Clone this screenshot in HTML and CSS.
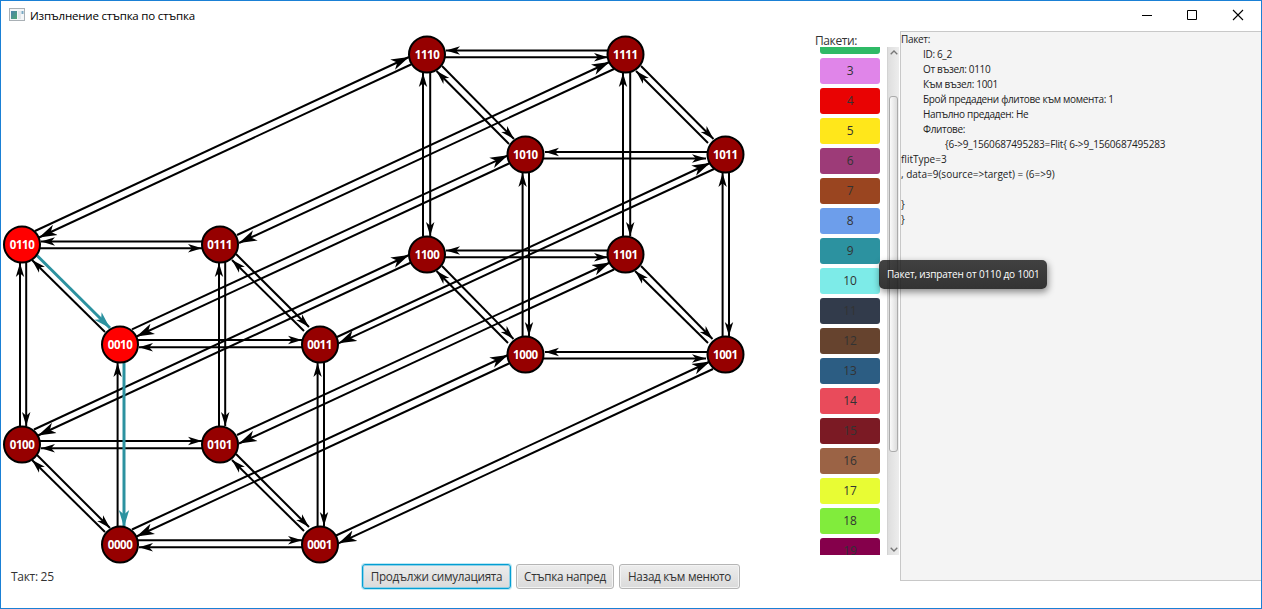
FILE: index.html
```
<!DOCTYPE html>
<html lang="bg">
<head>
<meta charset="utf-8">
<title>Изпълнение стъпка по стъпка</title>
<link rel="stylesheet" href="styles.css">
</head>
<body>
<div class="window">
  <header class="titlebar">
    <svg class="app-icon" width="16" height="14" viewBox="0 0 16 14">
      <defs><linearGradient id="pane" x1="0" y1="0" x2="1" y2="1"><stop offset="0" stop-color="#4b82ad"/><stop offset="1" stop-color="#4fa772"/></linearGradient></defs>
      <rect x=".5" y=".5" width="15" height="12" fill="#f4f6f8" stroke="#a9b0b5"/>
      <rect x="2" y="3" width="6" height="8" fill="url(#pane)"/>
      <rect x="9" y="3" width="3" height="8" fill="#e2e7eb"/>
      <rect x="12.500" y="3" width="2" height="3" fill="#7ba9c4"/>
    </svg>
    <span class="title">Изпълнение стъпка по стъпка</span>
    <svg class="controls" width="120" height="30" viewBox="1141 0 120 30" fill="none" stroke="#000">
      <path d="M1142 15.500h10M1187.500 10.500h9v9h-9z"/>
      <path d="M1233 10l10 10M1243 10l-10 10" stroke-width="1.100"/>
    </svg>
  </header>
  <main class="content">
    <section class="simulation">
      <svg class="graph" width="799" height="534" viewBox="1 31 799 534">
        <defs>
          <marker id="head" markerUnits="userSpaceOnUse" markerWidth="16" markerHeight="12" refX="14" refY="5" orient="auto"><path d="M0 .8L14 5L0 9.200L3.800 5z"/></marker>
          <marker id="head-long" markerUnits="userSpaceOnUse" markerWidth="20" markerHeight="14" refX="18" refY="6" orient="auto"><path d="M0 .3L18 6L0 11.700L5 6z"/></marker>
          <marker id="head-active" markerUnits="userSpaceOnUse" markerWidth="20" markerHeight="14" refX="17" refY="6" orient="auto"><path class="active-head" d="M0 .8L17 6L0 11.200L4.500 6z"/></marker>
        </defs>
        <g class="links">
          <path d="M202 241.500H41"/><path d="M40 248.200H202"/>
          <path d="M138 340H302"/><path d="M302 347.200H139"/>
          <path d="M40 441H202"/><path d="M202 448.200H41"/>
          <path d="M138 540.200H302"/><path d="M302 547.200H139"/>
          <path d="M608 50.500H446"/><path d="M445 57.200H608"/>
          <path d="M708 152H545"/><path d="M543 158.500H706"/>
          <path d="M608 250.500H446"/><path d="M445 257.200H608"/>
          <path d="M708 352H545"/><path d="M543 358.500H706"/>
          <path d="M20 426V263"/><path d="M26.200 262V426"/>
          <path d="M219 426V263"/><path d="M225.200 262V426"/>
          <path d="M117.600 527V363"/>
          <path d="M317.600 527V363"/><path d="M324 362V526"/>
          <path d="M423 236V73"/><path d="M430.200 72V236"/>
          <path d="M623 236V73"/><path d="M630.200 72V236"/>
          <path d="M522.600 336V173"/><path d="M529 172V336"/>
          <path d="M722.600 336V173"/><path d="M729 172V336"/>
          <path d="M105 332L32 260"/>
          <path d="M236 254L309 327"/><path d="M304 331L232 260"/>
          <path d="M37 455L110 528"/><path d="M105 532L32 460"/>
          <path d="M236 454L309 527"/><path d="M304 531L232 460"/>
          <path d="M442 66L514 139"/><path d="M509 144L436.500 71"/>
          <path d="M641 66L713.500 139"/><path d="M708 143L636 71"/>
          <path d="M442 266L513.500 339"/><path d="M508 343L436.500 271"/>
          <path d="M641 266L712.500 339"/><path d="M708 343L635 271"/>
        </g>
        <g class="links long">
          <path d="M35 231L409 57"/><path d="M411 64.500L39 237.500"/>
          <path d="M237 235L609.500 62"/><path d="M614 69L239 243"/>
          <path d="M132 329.300L508 155.300"/><path d="M509 163.500L136.500 336.500"/>
          <path d="M337 337L710 163"/><path d="M714 169L338.500 343.300"/>
          <path d="M34 429.500L409 255"/><path d="M411 262.500L38 435.500"/>
          <path d="M237 435L610 262.500"/><path d="M614 269.500L239 443.500"/>
          <path d="M132 529.500L508 355"/><path d="M509 363.500L136.500 536.500"/>
          <path d="M335 536L710 361.500"/><path d="M713 369L338.500 543.300"/>
        </g>
        <g class="links active">
          <path d="M37 255.500L110 328"/><path d="M124 362V527"/>
        </g>
        <g class="nodes">
          <circle class="busy" cx="22" cy="244.500" r="18"/><circle cx="220" cy="244.500" r="18"/>
          <circle class="busy" cx="120" cy="344.500" r="18"/><circle cx="320" cy="344.500" r="18"/>
          <circle cx="22" cy="444.500" r="18"/><circle cx="220" cy="444.500" r="18"/>
          <circle cx="120" cy="544.500" r="18"/><circle cx="320" cy="544.500" r="18"/>
          <circle cx="427" cy="54.500" r="18"/><circle cx="625.500" cy="54.500" r="18"/>
          <circle cx="525.500" cy="154.500" r="18"/><circle cx="725.500" cy="154.500" r="18"/>
          <circle cx="427" cy="254.500" r="18"/><circle cx="625.500" cy="254.500" r="18"/>
          <circle cx="525.500" cy="354.500" r="18"/><circle cx="725.500" cy="354.500" r="18"/>
        </g>
        <g class="node-labels">
          <text x="22.300" y="249" textLength="25">0110</text><text x="219.800" y="249" textLength="25">0111</text>
          <text x="120.300" y="349" textLength="25">0010</text><text x="319.800" y="349" textLength="25">0011</text>
          <text x="22.300" y="449" textLength="25">0100</text><text x="219.800" y="449" textLength="25">0101</text>
          <text x="120.300" y="549" textLength="25">0000</text><text x="319.800" y="549" textLength="25">0001</text>
          <text x="427.300" y="59" textLength="25">1110</text><text x="625.500" y="59" textLength="25">1111</text>
          <text x="525.600" y="159" textLength="25">1010</text><text x="725.500" y="159" textLength="25">1011</text>
          <text x="427.300" y="259" textLength="25">1100</text><text x="625.500" y="259" textLength="25">1101</text>
          <text x="525.600" y="359" textLength="25">1000</text><text x="725.500" y="359" textLength="25">1001</text>
        </g>
      </svg>
      <footer class="toolbar">
        <span class="tick">Такт: 25</span>
        <button class="btn btn-wide focused">Продължи симулацията</button>
        <button class="btn btn-step">Стъпка напред</button>
        <button class="btn btn-back">Назад към менюто</button>
      </footer>
    </section>
    <section class="packets">
      <h2 class="packets-title">Пакети:</h2>
      <div class="packets-view">
        <div class="packet-list">
          <div class="packet c2"></div><div class="packet c3">3</div><div class="packet c4">4</div>
          <div class="packet c5">5</div><div class="packet c6">6</div><div class="packet c7">7</div>
          <div class="packet c8">8</div><div class="packet c9">9</div><div class="packet c10">10</div>
          <div class="packet c11">11</div><div class="packet c12">12</div><div class="packet c13">13</div>
          <div class="packet c14">14</div><div class="packet c15">15</div><div class="packet c16">16</div>
          <div class="packet c17">17</div><div class="packet c18">18</div><div class="packet c19">19</div>
        </div>
        <div class="scrollbar">
          <svg class="chevron" width="8" height="5" viewBox="0 0 8 5"><path d="M.7 4.300L4 1l3.300 3.300"/></svg>
          <div class="thumb"></div>
          <svg class="chevron" width="8" height="5" viewBox="0 0 8 5"><path d="M.7 .7L4 4L7.300 .7"/></svg>
        </div>
      </div>
    </section>
    <section class="details">
      <p>Пакет:</p>
      <p class="in1">ID: 6_2</p>
      <p class="in1">От възел: 0110</p>
      <p class="in1">Към възел: 1001</p>
      <p class="in1">Брой предадени флитове към момента: 1</p>
      <p class="in1">Напълно предаден: Не</p>
      <p class="in1">Флитове:</p>
      <p class="in2">{6-&gt;9_1560687495283=Flit{ 6-&gt;9_1560687495283</p>
      <p class="code">flitType=3</p>
      <p class="code">, data=9(source=&gt;target) = (6=&gt;9)</p>
      <p class="blank"></p>
      <p>}</p>
      <p>}</p>
    </section>
  </main>
  <div class="tooltip">Пакет, изпратен от 0110 до 1001</div>
</div>
</body>
</html>
```
FILE: styles.css
```
* { box-sizing: border-box; }
body { margin: 0; overflow: hidden; font-family: "Open Sans", "Noto Sans", sans-serif; font-size: 12px; color: #333; }
.window { position: relative; display: flex; flex-direction: column; width: 1262px; height: 609px; border: 1px solid #1a80d5; background: #fff; }
.titlebar { display: flex; height: 30px; flex: none; padding-left: 8px; color: #000; }
.app-icon { margin-top: 7px; }
.title { margin-left: 5px; line-height: 30px; font-size: 11.5px; letter-spacing: -.2px; white-space: nowrap; }
.controls { margin-left: auto; margin-top: -1px; }
.content { display: flex; flex: 1; }
.simulation { width: 813px; display: flex; flex-direction: column; }
.graph { display: block; flex: none; margin-bottom: -1px; }
.links { stroke: #000; stroke-width: 2; fill: none; }
.links path { marker-end: url(#head); }
.links.long path { marker-end: url(#head-long); }
marker path { fill: #000; stroke: none; }
.links.active { stroke: #2c92a0; stroke-width: 3; }
.links.active path { marker-end: url(#head-active); }
marker .active-head { fill: #2c92a0; }
.nodes circle { fill: #960000; stroke: #000; stroke-width: 2; }
.nodes .busy { fill: #f00; }
.node-labels { fill: #fff; font-size: 11.5px; font-weight: 700; text-anchor: middle; }
.toolbar { display: flex; align-items: center; height: 25px; letter-spacing: -.27px; font-size: 11.7px; }
.tick { flex: none; width: 361px; padding-left: 10px; font-size: 12px; letter-spacing: -.3px; }
.btn { flex: none; height: 25px; margin: 0 5px 0 0; padding: 0 0 1px; border: 1px solid #b5b5b5; border-radius: 3px; background: linear-gradient(#ededed, #dadada); box-shadow: inset 0 0 0 1px #f3f3f3; color: #333; font: inherit; letter-spacing: inherit; white-space: nowrap; }
.btn-wide { width: 149px; }
.btn-step { width: 98px; }
.btn-back { width: 121px; }
.btn.focused { border-color: #039ed3; box-shadow: 0 0 0 1px #bce8f4, inset 0 0 0 1px #8fd0e6; }
.packets { width: 85px; }
.packets-title { margin: 0; height: 16px; padding-left: 1px; font-size: 12px; font-weight: 400; line-height: 19px; letter-spacing: -.4px; }
.packets-view { display: flex; justify-content: space-between; height: 508px; overflow: hidden; padding-left: 6px; }
.packet-list { display: flex; flex-direction: column; gap: 4px; width: 60px; margin-top: -19px; }
.packet { flex: none; height: 26px; border-radius: 3px; line-height: 26px; text-align: center; letter-spacing: -.2px; }
.c2 { background: #2fba66; }
.c3 { background: #e085e9; }
.c4 { background: #e90303; }
.c5 { background: #ffe71b; }
.c6 { background: #9d3b78; }
.c7 { background: #9a4520; }
.c8 { background: #6d9eeb; }
.c9 { background: #2c92a0; }
.c10 { background: #7debe8; }
.c11 { background: #323b4b; }
.c12 { background: #66432e; }
.c13 { background: #2c5d83; }
.c14 { background: #e94b5b; }
.c15 { background: #7b1a24; }
.c16 { background: #9b6345; }
.c17 { background: #e8fc34; }
.c18 { background: #81ec3c; }
.c19 { background: #85004b; }
.scrollbar { display: flex; flex-direction: column; align-items: center; justify-content: space-between; width: 12px; height: 508px; padding: 3px 0; border-left: 1px solid #d3d3d3; background: linear-gradient(90deg, #dedede, #ededed); }
.chevron { flex: none; fill: none; stroke: #777; stroke-width: 1.300; }
.thumb { width: 9px; height: 356px; margin-top: 41px; margin-bottom: 95px; border: 1px solid #ababab; border-radius: 3px; background: linear-gradient(90deg, #fafafa, #dcdcdc); }
.details { flex: none; width: 361px; height: 550px; margin-left: 1px; border: solid #c8c8c8; border-width: 1px 0 1px 1px; background: #f4f4f4; color: #222; font-size: 10px; letter-spacing: -.33px; }
.details p { margin: 0; height: 15px; line-height: 15px; white-space: pre; }
.details .in1 { padding-left: 22px; }
.details .in2 { padding-left: 44px; letter-spacing: -.17px; }
.details .code { letter-spacing: 0; }
.tooltip { position: absolute; left: 878px; top: 259px; width: 168px; height: 29px; border-radius: 5px; background: linear-gradient(rgba(30,30,30,.84), rgba(30,30,30,.9)); box-shadow: 1px 3px 7px rgba(0,0,0,.45); color: #fff; font-size: 10px; letter-spacing: -.17px; line-height: 29px; padding-left: 8px; white-space: nowrap; }
```
